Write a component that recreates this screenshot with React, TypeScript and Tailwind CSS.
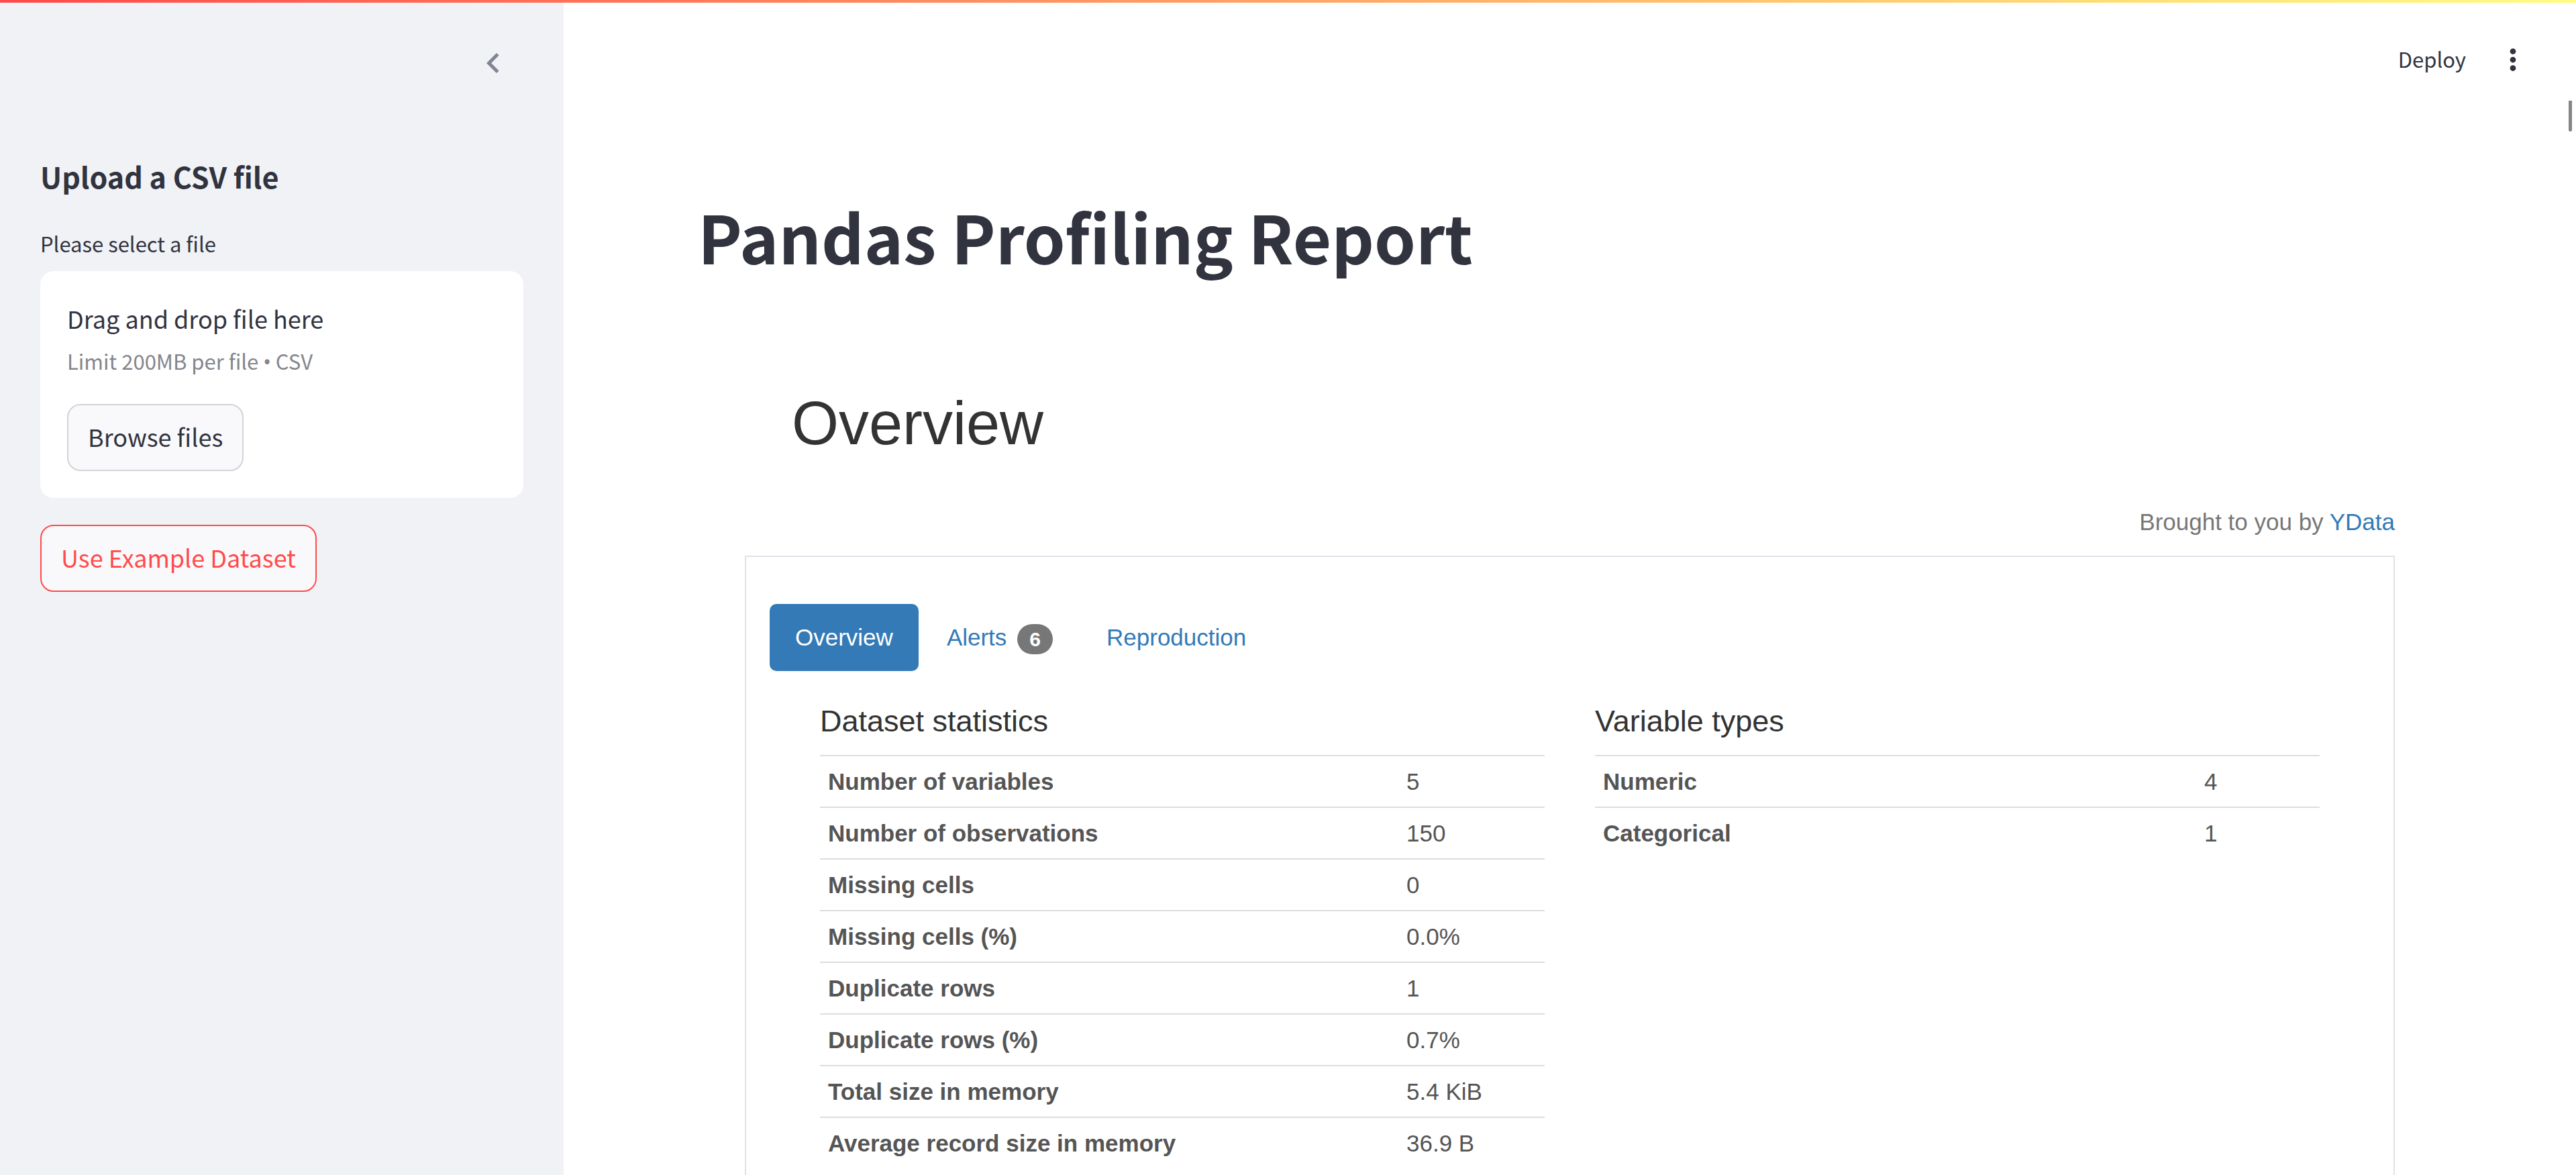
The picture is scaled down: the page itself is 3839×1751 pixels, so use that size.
import { useRef, useState } from "react";

type Row = { label: string; value: string };

const datasetStatistics: Row[] = [
  { label: "Number of variables", value: "5" },
  { label: "Number of observations", value: "150" },
  { label: "Missing cells", value: "0" },
  { label: "Missing cells (%)", value: "0.0%" },
  { label: "Duplicate rows", value: "1" },
  { label: "Duplicate rows (%)", value: "0.7%" },
  { label: "Total size in memory", value: "5.4 KiB" },
  { label: "Average record size in memory", value: "36.9 B" },
];

const variableTypes: Row[] = [
  { label: "Numeric", value: "4" },
  { label: "Categorical", value: "1" },
];

const tabs = [
  { name: "Overview", count: 0 },
  { name: "Alerts", count: 6 },
  { name: "Reproduction", count: 0 },
];

function Sidebar() {
  const fileInput = useRef<HTMLInputElement>(null);
  return (
    <aside className="w-[840px] shrink-0 bg-[#f0f2f6] px-[60px] pt-[64px]">
      <div className="flex justify-end pr-[15px]">
        <button type="button" aria-label="Collapse sidebar" className="text-[#808495]">
          <svg viewBox="0 0 24 24" className="size-[60px]" fill="currentColor" aria-hidden="true">
            <path d="M15.41 7.41 14 6l-6 6 6 6 1.41-1.41L10.83 12z" />
          </svg>
        </button>
      </div>

      <h2 className="mt-[108px] text-[43px] leading-[60px] font-semibold">Upload a CSV file</h2>

      <label htmlFor="csv-file" className="mt-[46px] block text-[31px] leading-[50px]">
        Please select a file
      </label>
      <section className="mt-[16px] rounded-[20px] bg-white p-[40px]">
        <p className="text-[36px] leading-[60px]">Drag and drop file here</p>
        <p className="mt-[9px] text-[31px] leading-[50px] text-[#83858c]">
          Limit 200MB per file <span className="font-['Noto_Sans',sans-serif] leading-none">•</span> CSV
        </p>
        <input ref={fileInput} id="csv-file" type="file" accept=".csv" className="hidden" />
        <button
          type="button"
          onClick={() => fileInput.current?.click()}
          className="mt-[39px] block h-[100px] rounded-[20px] border-2 border-[#d2d3d8] bg-[#f9f9fb] px-[29px] pb-[4px] text-[36px] leading-[60px]"
        >
          Browse files
        </button>
      </section>

      <button
        type="button"
        className="mt-[40px] block h-[100px] rounded-[20px] border-2 border-[#ff4b4b] bg-[#f9f9fb] px-[29px] pb-[4px] text-[36px] leading-[60px] text-[#ff4b4b]"
      >
        Use Example Dataset
      </button>
    </aside>
  );
}

function StatsTable({ title, rows, valueWidth }: { title: string; rows: Row[]; valueWidth: string }) {
  return (
    <div className="min-w-0 flex-1">
      <h4 className="text-[45px] leading-[50px] text-[#333333]">{title}</h4>
      <table className="mt-[25px] w-full table-fixed border-collapse text-[35px] leading-[50px] text-[#555555]">
        <tbody>
          {rows.map((row) => (
            <tr key={row.label} className="h-[77px] border-t-2 border-[#dddddd]">
              <th scope="row" className="px-[12px] text-left font-bold">
                {row.label}
              </th>
              <td className={`px-[12px] ${valueWidth}`}>{row.value}</td>
            </tr>
          ))}
        </tbody>
      </table>
    </div>
  );
}

function Report() {
  const [active, setActive] = useState("Overview");
  return (
    <div className="mt-[170px] flex flex-1 flex-col px-[70px] font-['Liberation_Sans',Arial,sans-serif]">
      <h1 className="pl-[70px] text-[90px] leading-[100px] text-[#333333]">Overview</h1>
      <p className="mt-[72px] text-right text-[35px] leading-[50px] text-[#777777]">
        Brought to you by{" "}
        <a href="#ydata" className="text-[#337ab7]">
          YData
        </a>
      </p>
      <div className="mt-[25px] flex-1 border-2 border-b-0 border-[#e1e1e8] pt-[70px]">
        <div role="tablist" className="flex gap-[4px] px-[35px]">
          {tabs.map((tab) => (
            <button
              key={tab.name}
              type="button"
              role="tab"
              aria-selected={active === tab.name}
              onClick={() => setActive(tab.name)}
              className={`flex h-[100px] items-center rounded-[10px] px-[38px] text-[35px] leading-[50px] ${
                active === tab.name ? "bg-[#337ab7] text-white" : "text-[#337ab7]"
              }`}
            >
              {tab.name}
              {tab.count > 0 && (
                <span className="mt-[5px] ml-[16px] flex h-[45px] items-center rounded-[25px] bg-[#777777] px-[18px] text-[30px] leading-[30px] font-bold text-white">
                  {tab.count}
                </span>
              )}
            </button>
          ))}
        </div>
        <div className="mt-[50px] flex gap-[75px] px-[110px]">
          <StatsTable title="Dataset statistics" rows={datasetStatistics} valueWidth="w-[218px]" />
          <StatsTable title="Variable types" rows={variableTypes} valueWidth="w-[184px]" />
        </div>
      </div>
    </div>
  );
}

export default function App() {
  return (
    <div className="relative flex min-h-screen bg-white font-['Noto_Sans_CJK_SC',sans-serif] text-[#31333f]">
      <div className="absolute inset-x-0 top-0 h-[4px] bg-[linear-gradient(90deg,#ff4b4b,#fffd80)]" />
      <Sidebar />
      <div className="flex min-w-0 flex-1 flex-col">
        <header className="flex h-[150px] items-start justify-end gap-[45px] pt-[64px] pr-[69px]">
          <button type="button" className="text-[31px] leading-[48px]">
            Deploy
          </button>
          <button type="button" aria-label="Main menu">
            <svg viewBox="0 0 24 24" className="size-[50px]" fill="currentColor" aria-hidden="true">
              <circle cx="12" cy="6" r="2.1" />
              <circle cx="12" cy="12" r="2.1" />
              <circle cx="12" cy="18" r="2.1" />
            </svg>
          </button>
        </header>
        <main className="relative flex flex-1 flex-col px-[200px] pt-[141px]">
          <div className="absolute top-0 right-[6px] h-[46px] w-[5px] rounded-b-[3px] bg-[#858585]" />
          <h1 className="text-[99px] leading-[120px] font-bold">Pandas Profiling Report</h1>
          <Report />
        </main>
      </div>
    </div>
  );
}
